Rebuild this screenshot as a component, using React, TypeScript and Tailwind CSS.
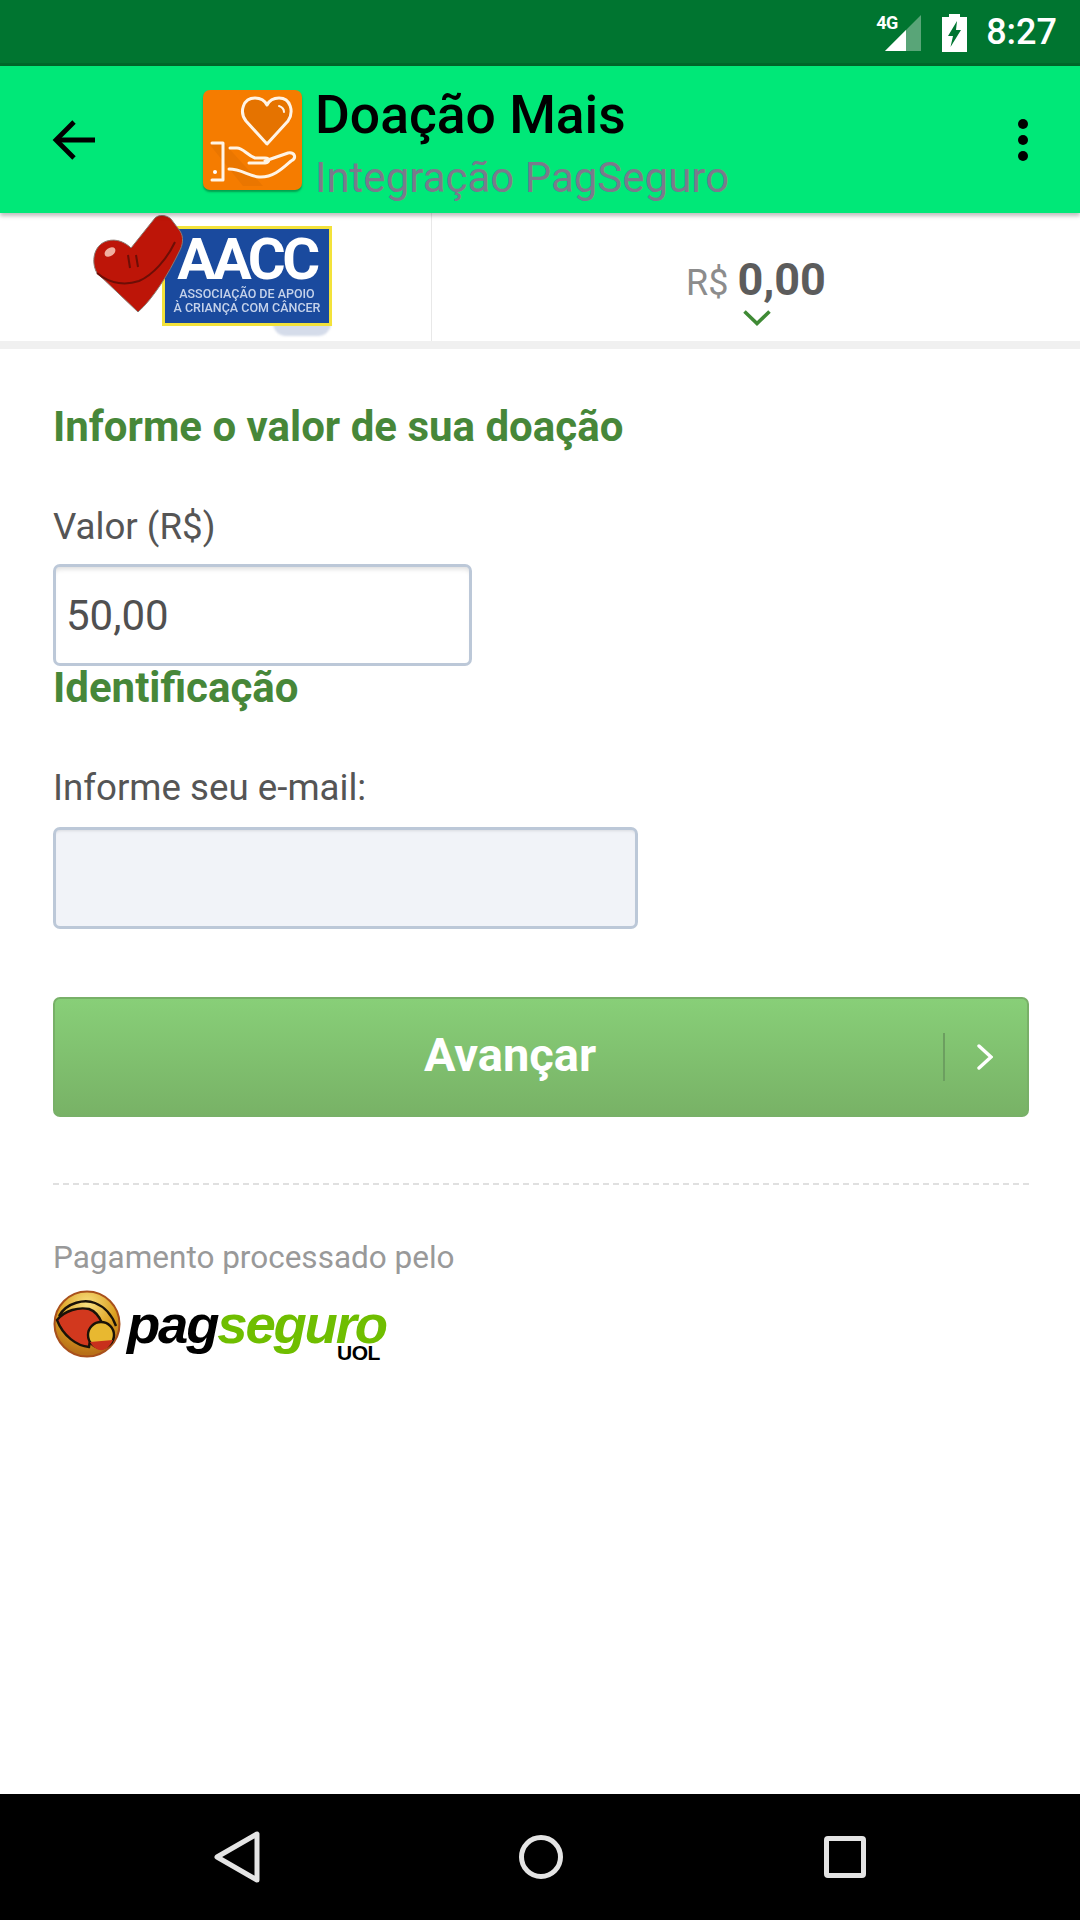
function StatusBar() {
  return (
    <div className="h-[66px] bg-[#007530] border-b-[3px] border-[#00672a] flex items-center justify-end pr-[23px] text-white shrink-0">
      <div className="relative w-[36px] h-[36px] mr-[21px] mt-[3px]">
        <svg width="36" height="36" viewBox="0 0 36 36" className="absolute left-0 top-0">
          <path d="M0 36 L36 0 V36 Z" fill="#ffffff" fillOpacity="0.35" />
          <path d="M0 36 L21 15 V36 Z" fill="#ffffff" />
        </svg>
        <span className="absolute left-[-9px] top-[-1px] text-[18px] font-bold leading-[18px] tracking-[-0.5px] font-['Roboto',sans-serif]">4G</span>
      </div>
      <svg width="25" height="38" viewBox="0 0 25 38" className="mr-[19px] mt-[3px]">
        <path d="M7 0 H18 V3 H25 V38 H0 V3 H7 Z" fill="#ffffff" />
        <path d="M15 7 L6 22 H11 L8.5 33 L19 16 H14 Z" fill="#007530" />
      </svg>
      <span className="text-[36px] font-medium leading-none font-['Roboto',sans-serif]">8:27</span>
    </div>
  );
}

function AppIcon() {
  return (
    <div className="w-[99px] h-[100px] rounded-[7px] bg-[#f57c00] shadow-[0_2px_2px_rgba(0,90,40,0.5)] shrink-0 overflow-hidden">
      <svg width="99" height="100" viewBox="0 0 99 100" fill="none" stroke="#fff4e6" strokeWidth="3" strokeLinecap="round" strokeLinejoin="round">
        <path d="M7 55 L22 54 L60 96 H40 Z" fill="#ea7600" stroke="none" />
        <path d="M64 54 L43 31 C36 22 40 8 52 8 C58 8 62 11 64 15 C66 11 70 8 76 8 C88 8 91 22 85 31 Z" fill="#e57300" />
        <path d="M76 16 C79 17 81 19 81 22" strokeWidth="2" />
        <path d="M9 53 H20 V90 H9" />
        <path d="M27 58 H34 C40 58 44 65 52 68 H62 C67 68 67 72 62 73 H46" />
        <path d="M62 71 L85 63 C92 62 94 68 88 71 C80 78 70 88 56 87 C46 86 38 79 26 79" />
        <circle cx="12" cy="82" r="2" fill="#ffffff" stroke="none" />
      </svg>
    </div>
  );
}

function AppBar() {
  return (
    <div className="h-[147px] bg-[#00e878] flex items-center relative z-10 shadow-[0_3px_4px_rgba(0,0,0,0.25)] shrink-0">
      <div className="w-[203px] pl-[52px] shrink-0">
        <svg width="43" height="40" viewBox="0 0 43 40" fill="none" stroke="#000000" strokeWidth="4.8">
          <path d="M43 20 H4" />
          <path d="M22 2 L4 20 L22 38" />
        </svg>
      </div>
      <AppIcon />
      <div className="ml-[13px] mt-[9px] flex-1 font-['Roboto',sans-serif]">
        <div className="text-[53.4px] leading-[60px] font-medium text-black">Doação Mais</div>
        <div className="text-[42px] leading-[50px] mt-[8px] text-[#7a7a8c]">Integração PagSeguro</div>
      </div>
      <div className="w-[10px] mr-[52px] flex flex-col gap-[6px] shrink-0">
        <div className="w-[10px] h-[10px] rounded-full bg-black" />
        <div className="w-[10px] h-[10px] rounded-full bg-black" />
        <div className="w-[10px] h-[10px] rounded-full bg-black" />
      </div>
    </div>
  );
}

function AaccLogo() {
  return (
    <div className="relative w-[244px] h-[124px] blur-[0.7px]">
      <div className="absolute left-[180px] top-[108px] w-[58px] h-[13px] rounded-b-full bg-[#d5dcea] blur-[1px]" />
      <div className="absolute left-[69px] top-[11px] w-[170px] h-[100px] bg-[#1a4a9e] border-[3px] border-[#f3e23a] text-white text-center font-['Roboto',sans-serif] overflow-hidden pt-[3px]">
        <div className="text-[58px] font-bold tracking-[-3.5px] leading-[55px]">AACC</div>
        <div className="text-[12.5px] font-medium leading-[14px] text-[#c5d2ea] whitespace-nowrap">ASSOCIAÇÃO DE APOIO</div>
        <div className="text-[12.5px] font-medium leading-[14px] text-[#c5d2ea] whitespace-nowrap">À CRIANÇA COM CÂNCER</div>
      </div>
      <svg width="92" height="100" viewBox="0 0 92 100" className="absolute left-0 top-0">
        <path d="M45 97 L4 58 C-2 48 0 30 14 26 C24 23 33 28 38 33 L62 3 C66 -1 74 0 78 4 L87 16 C91 22 90 30 86 37 C76 58 60 84 45 97 Z" fill="#bd1508" stroke="#8a7a72" strokeWidth="1" />
        <path d="M4 58 C18 70 34 70 46 66 C60 60 74 44 82 27" fill="none" stroke="#6d0e06" strokeWidth="2" />
        <path d="M35 40 L37 53 M43 40 L45 52" stroke="#6d0e06" strokeWidth="2" />
        <ellipse cx="17" cy="37" rx="6" ry="4" fill="#f0b0a0" transform="rotate(-35 17 37)" />
      </svg>
    </div>
  );
}

function DonationHeader() {
  return (
    <div className="h-[128px] flex shrink-0">
      <div className="w-[432px] border-r border-[#e8e8e8] pt-[2px] pl-[93px] shrink-0">
        <AaccLogo />
      </div>
      <div className="flex-1 flex flex-col items-center pt-[44px] font-['Roboto',sans-serif]">
        <div className="leading-[46px] whitespace-nowrap">
          <span className="text-[36px] text-[#8c8c8c]">R$ </span>
          <span className="text-[45px] font-bold text-[#5c5c5c]">0,00</span>
        </div>
        <svg width="28" height="16" viewBox="0 0 28 16" fill="none" stroke="#3f8a35" strokeWidth="3.6" className="-mt-[3px] ml-[2px]">
          <path d="M1.5 1.5 L14 13.5 L26.5 1.5" />
        </svg>
      </div>
    </div>
  );
}

function PagSeguroLogo() {
  return (
    <div className="mt-[15px] h-[70px] flex items-start relative">
      <svg width="68" height="68" viewBox="0 0 68 68" className="shrink-0">
        <defs>
          <radialGradient id="globe" cx="50%" cy="20%" r="75%">
            <stop offset="0%" stopColor="#f8e080" />
            <stop offset="60%" stopColor="#dca020" />
            <stop offset="100%" stopColor="#b87018" />
          </radialGradient>
        </defs>
        <circle cx="34" cy="34" r="32.5" fill="url(#globe)" stroke="#a8501c" strokeWidth="2" />
        <path d="M4 30 C12 20 26 17 36 19 C42 21 46 26 49 33 C42 36 37 46 36 57 C24 56 10 46 4 30 Z" fill="#d2381e" stroke="#1a1208" strokeWidth="2.4" />
        <circle cx="48" cy="45" r="13" fill="#e8b830" stroke="#1a1208" strokeWidth="2.4" />
        <path d="M37 52 C40 58 46 61 50 60 C54 59 58 55 60 50 Z" fill="#c8301c" />
        <path d="M6 26 C14 12 32 9 42 13 C52 17 59 25 63 36" fill="none" stroke="#1a1208" strokeWidth="2.4" />
      </svg>
      <div className="ml-[6px] mt-[12px] text-[54.5px] leading-[46px] font-bold italic tracking-[-2.2px] font-['Liberation_Sans',sans-serif] whitespace-nowrap">
        <span className="text-black">pag</span>
        <span className="text-[#6fbe00]">seguro</span>
      </div>
      <span className="absolute left-[284px] top-[56px] text-[21px] leading-[14px] font-black tracking-[-0.5px] text-black font-['Liberation_Sans',sans-serif]">UOL</span>
    </div>
  );
}

function DonationForm() {
  return (
    <div className="pl-[53px] pr-[51px] pt-[51px] font-['Roboto',sans-serif]">
      <h2 className="text-[42px] leading-[54px] font-bold text-[#478739]">Informe o valor de sua doação</h2>
      <label className="block mt-[49px] text-[36.7px] leading-[48px] text-[#555555]">Valor (R$)</label>
      <div className="mt-[13px] w-[419px] h-[102px] rounded-[7px] border-[3px] border-[#bcc8d8] bg-white shadow-[inset_0_5px_5px_-3px_rgba(0,0,0,0.14)] flex items-center pl-[10px] text-[42px] text-[#505050]">50,00</div>
      <h2 className="text-[42px] leading-[44px] font-bold text-[#478739]">Identificação</h2>
      <label className="block mt-[54px] text-[36.7px] leading-[48px] text-[#555555]">Informe seu e-mail:</label>
      <div className="mt-[15px] w-[585px] h-[102px] rounded-[7px] border-[3px] border-[#bcc8d8] bg-[#f1f3f8] shadow-[inset_0_3px_3px_-2px_rgba(0,0,0,0.1)]" />
      <button className="mt-[68px] w-full h-[120px] rounded-[7px] border-[2px] border-[#78b068] bg-gradient-to-b from-[#88cf78] to-[#78b266] flex items-center text-white">
        <span className="flex-1 text-center text-[47px] font-bold pl-[22px] pb-[4px]">Avançar</span>
        <span className="w-[2px] h-[48px] bg-[#6c9f60]" />
        <svg width="16" height="26" viewBox="0 0 16 26" fill="none" stroke="#ffffff" strokeWidth="3.4" strokeLinecap="round" className="ml-[32px] mr-[34px]">
          <path d="M2 2 L14 13 L2 24" />
        </svg>
      </button>
      <div className="mt-[66px] border-t-2 border-dashed border-[#e0e0e0]" />
      <p className="mt-[56px] text-[31.5px] leading-[34px] text-[#999999]">Pagamento processado pelo</p>
      <PagSeguroLogo />
    </div>
  );
}

function NavBar() {
  return (
    <div className="h-[126px] bg-black flex items-center justify-between pl-[214px] pr-[214px] shrink-0">
      <svg width="46" height="52" viewBox="0 0 46 52" fill="none" stroke="#e4e4e4" strokeWidth="5" strokeLinejoin="round">
        <path d="M3 26 L43 3 V49 Z" />
      </svg>
      <svg width="44" height="46" viewBox="0 0 44 46" fill="none" stroke="#e4e4e4" strokeWidth="5" className="-ml-[3px]">
        <circle cx="22" cy="23" r="19.5" />
      </svg>
      <svg width="42" height="42" viewBox="0 0 42 42" fill="none" stroke="#e4e4e4" strokeWidth="5" strokeLinejoin="round">
        <rect x="2.5" y="2.5" width="37" height="37" rx="1.5" />
      </svg>
    </div>
  );
}

export default function App() {
  return (
    <div className="w-[1080px] h-[1920px] flex flex-col bg-white overflow-hidden">
      <StatusBar />
      <AppBar />
      <DonationHeader />
      <div className="h-[8px] bg-[#f0f0f0] shrink-0" />
      <div className="flex-1">
        <DonationForm />
      </div>
      <NavBar />
    </div>
  );
}
